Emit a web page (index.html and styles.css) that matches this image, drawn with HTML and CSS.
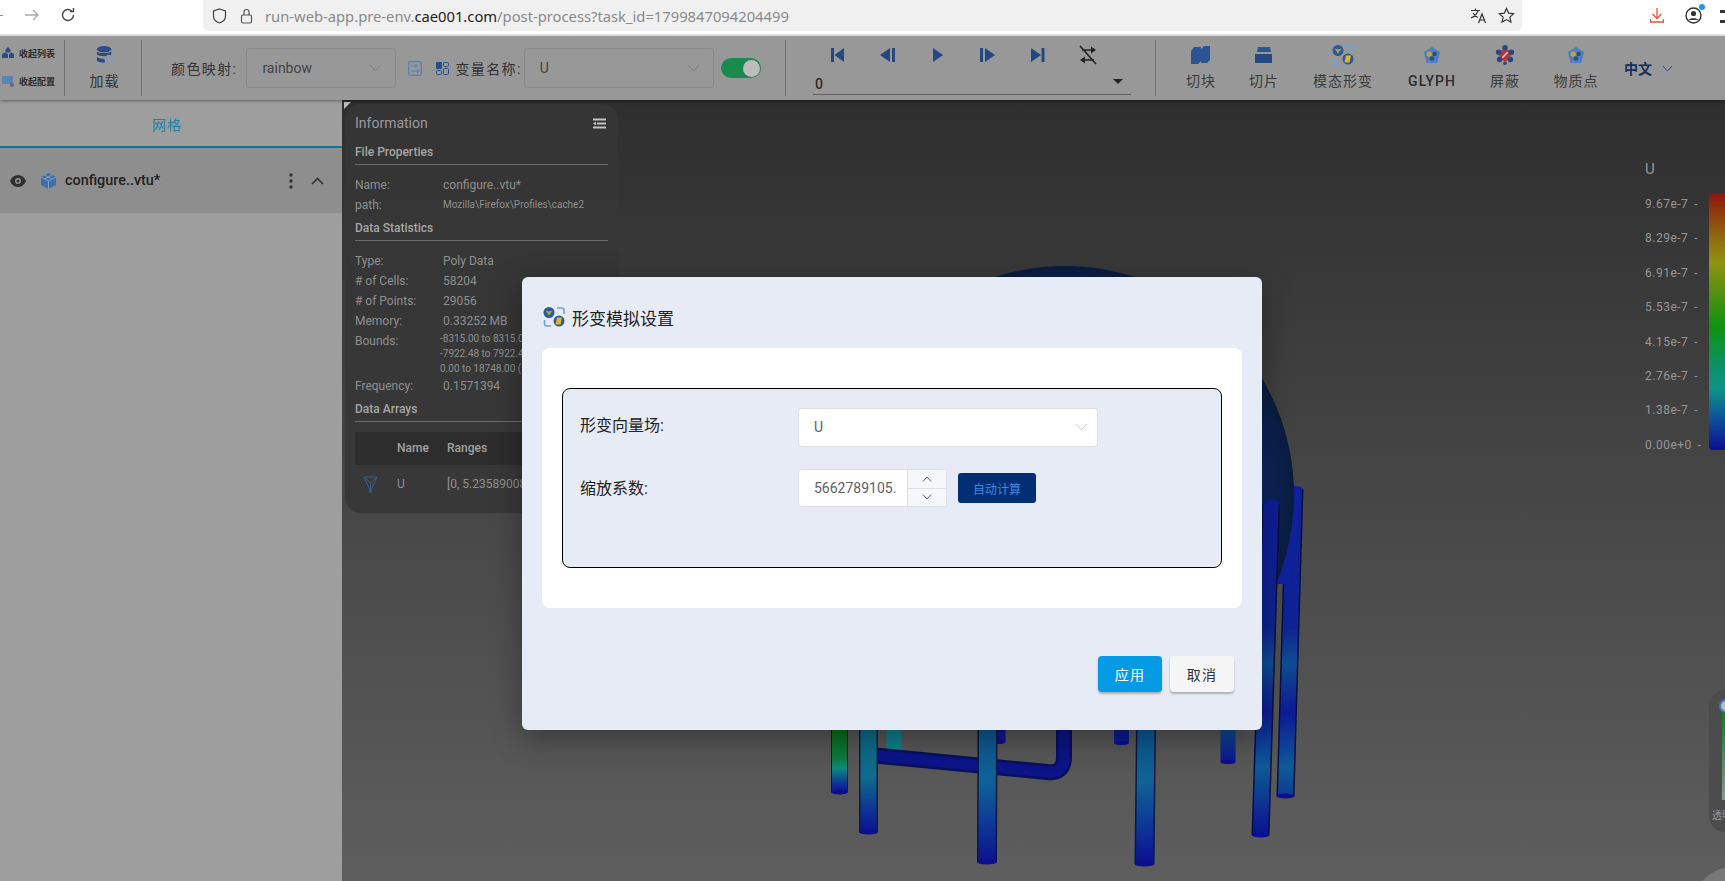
FILE: index.html
```html
<!DOCTYPE html>
<html>
<head>
  <title>Post Process</title>
  <link rel="stylesheet" href="styles.css">
</head>
<body>
  <svg class="defs" width="0" height="0">
    <defs>
      <symbol id="modeIcon" viewBox="0 0 22 20">
        <circle cx="6" cy="5.500" r="5.500" fill="#2a5aa0"/>
        <path d="M2.500 3.500l3.500 1 3.500-1L6 8.500z" fill="#c9a227"/>
        <circle cx="16" cy="14" r="5.500" fill="#2a5aa0"/>
        <path d="M14 10.500h5l-1.500 7h-5z" fill="#e6b422"/>
        <path d="M14 1h4.500q2.500 0 2.500 2.500V7M8 19H4q-2.500 0-2.500-2.500V13" fill="none" stroke="#6fa0e0" stroke-width="1.600"/>
      </symbol>
      <symbol id="penta" viewBox="0 0 20 20">
        <path d="M10 1l9 6-3 12H4L1 7z" fill="#4f7fc0"/>
        <circle cx="7" cy="9" r="3" fill="#c9a227"/>
        <circle cx="13" cy="9" r="2.500" fill="#2a4d85"/>
        <circle cx="10" cy="14" r="2.500" fill="#2a4d85"/>
      </symbol>
      <linearGradient id="tubeFront" gradientUnits="userSpaceOnUse" x1="0" y1="700" x2="0" y2="866">
        <stop offset="0" stop-color="#0e4f8c"/>
        <stop offset="0.500" stop-color="#0e6296"/>
        <stop offset="0.800" stop-color="#0e2f98"/>
        <stop offset="1" stop-color="#0c0e90"/>
      </linearGradient>
      <linearGradient id="tubeTeal" gradientUnits="userSpaceOnUse" x1="0" y1="730" x2="0" y2="834">
        <stop offset="0" stop-color="#0e6a88"/>
        <stop offset="0.450" stop-color="#0e6c8c"/>
        <stop offset="0.800" stop-color="#0e2e96"/>
        <stop offset="1" stop-color="#0c0e90"/>
      </linearGradient>
      <linearGradient id="tubeGreen" gradientUnits="userSpaceOnUse" x1="0" y1="730" x2="0" y2="794">
        <stop offset="0" stop-color="#0b6a1a"/>
        <stop offset="0.450" stop-color="#0c7a40"/>
        <stop offset="0.600" stop-color="#0d8a80"/>
        <stop offset="0.850" stop-color="#0e2e96"/>
        <stop offset="1" stop-color="#0c0e90"/>
      </linearGradient>
      <linearGradient id="tubeRear" gradientUnits="userSpaceOnUse" x1="0" y1="730" x2="0" y2="763">
        <stop offset="0" stop-color="#0e4a8c"/>
        <stop offset="1" stop-color="#0c1490"/>
      </linearGradient>
      <linearGradient id="tubeRight" gradientUnits="userSpaceOnUse" x1="0" y1="489" x2="0" y2="837">
        <stop offset="0" stop-color="#0e1e9a"/>
        <stop offset="0.400" stop-color="#0e2494"/>
        <stop offset="0.500" stop-color="#0e4f92"/>
        <stop offset="0.640" stop-color="#0e1a98"/>
        <stop offset="0.800" stop-color="#0e5a96"/>
        <stop offset="1" stop-color="#0c0e90"/>
      </linearGradient>
      <radialGradient id="sphereShade" gradientUnits="userSpaceOnUse" cx="1065" cy="495" r="229">
        <stop offset="0" stop-color="#10309a"/>
        <stop offset="0.800" stop-color="#0f2a72"/>
        <stop offset="1" stop-color="#0a1c3e"/>
      </radialGradient>
    </defs>
  </svg>

  <div class="browser-bar">
    <span class="nav-back"></span>
    <svg class="nav-icon forward" width="16" height="16" viewBox="0 0 16 16"><path d="M1 8h13M9 3l5 5-5 5" fill="none" stroke="#aaa" stroke-width="1.300"/></svg>
    <svg class="nav-icon reload" width="16" height="16" viewBox="0 0 16 16"><path d="M13.500 8a5.500 5.500 0 1 1-1.800-4.100M13.500 1v3.500H10" fill="none" stroke="#444" stroke-width="1.400"/></svg>
    <div class="url-bar">
      <svg class="url-shield" width="15" height="16" viewBox="0 0 15 16"><path d="M7.500 1l6 2v5c0 3.500-3 6-6 7-3-1-6-3.500-6-7V3z" fill="none" stroke="#444" stroke-width="1.200"/></svg>
      <svg class="url-lock" width="13" height="16" viewBox="0 0 13 16"><rect x="1.500" y="7" width="10" height="8" rx="1.500" fill="none" stroke="#555" stroke-width="1.200"/><path d="M4 7V4a2.500 2.500 0 0 1 5 0v3" fill="none" stroke="#555" stroke-width="1.200"/></svg>
      <span class="url-text">run-web-app.pre-env.<b>cae001.com</b>/post-process?task_id=1799847094204499</span>
      <svg class="url-translate" width="17" height="17" viewBox="0 0 17 17"><path d="M1 3.500h9M5.500 1.500v2M8 3.500c-1 3.500-3.500 6-7 7.500M3 6c1 2 3 3.500 5 4.500" fill="none" stroke="#333" stroke-width="1.100"/><path d="M8.500 16l3.500-9 3.500 9M9.800 13h4.400" fill="none" stroke="#333" stroke-width="1.200"/></svg>
      <svg class="url-star" width="17" height="17" viewBox="0 0 17 17"><path d="M8.500 1.500l2.100 4.600 5 .6-3.700 3.400 1 5-4.400-2.500-4.400 2.500 1-5L1.400 6.700l5-.6z" fill="none" stroke="#333" stroke-width="1.200"/></svg>
    </div>
    <svg class="bar-download" width="14" height="15" viewBox="0 0 14 15"><path d="M7 0v10M2.500 6L7 10.500 11.500 6M.5 11v3h13v-3" fill="none" stroke="#e8562a" stroke-width="1.300"/></svg>
    <div class="bar-profile">
      <svg width="17" height="17" viewBox="0 0 17 17"><circle cx="8.500" cy="8.500" r="7.500" fill="none" stroke="#333" stroke-width="1.400"/><circle cx="8.500" cy="6.500" r="2.600" fill="#333"/><path d="M3.500 13c1-2.500 9-2.500 10 0z" fill="#333"/></svg>
      <span class="profile-dot"></span>
    </div>
    <span class="bar-menu"></span>
  </div>

  <div class="toolbar">
    <div class="fold-group">
      <div class="fold-item">
        <svg width="12" height="12" viewBox="0 0 12 12"><path d="M6 0l2.500 2.500v3H3.500v-3zM0 7l3-1.500L6 7v4H0zM7 7l2.500-1.500L12 7v4H7z" fill="#2a4d85"/></svg>
        <span>收起列表</span>
      </div>
      <div class="fold-item">
        <svg width="12" height="12" viewBox="0 0 12 12"><rect x="0" y="1" width="11" height="8" fill="#5f80b5"/><circle cx="10" cy="10" r="2" fill="#667"/></svg>
        <span>收起配置</span>
      </div>
    </div>
    <div class="divider"></div>
    <div class="load-btn">
      <svg width="18" height="18" viewBox="0 0 18 20"><ellipse cx="8" cy="3.500" rx="8" ry="3.500" fill="#2a4d85"/><path d="M0 6c2 2.500 14 2.500 16 0v3.500c-2 2.500-14 2.500-16 0zM0 12c2 2.500 8 2.500 9 2v4c-3 1-8 0-9-2z" fill="#2a4d85"/><circle cx="13" cy="14.500" r="4" fill="none" stroke="#6fa0d0" stroke-width="1.800" stroke-dasharray="4 1.500"/></svg>
      <span>加载</span>
    </div>
    <div class="divider"></div>

    <div class="settings">
      <span class="tool-label color-label">颜色映射:</span>
      <div class="tool-select color-select">
        <span>rainbow</span>
        <svg width="13" height="8" viewBox="0 0 13 8"><path d="M1 1l5.500 6L12 1" fill="none" stroke="#7d7d7d" stroke-width="1"/></svg>
      </div>
      <svg class="set-icon" width="14" height="15" viewBox="0 0 14 15"><rect x=".7" y=".7" width="12.600" height="13.600" rx="1.500" fill="none" stroke="#4f7fc0" stroke-width="1.200"/><path d="M3 5h3M3 10h5" stroke="#4f7fc0"/><circle cx="8" cy="5" r="1.300" fill="none" stroke="#4f7fc0"/><circle cx="10" cy="10" r="1.300" fill="none" stroke="#4f7fc0"/></svg>
      <svg class="grid-icon" width="13" height="13" viewBox="0 0 13 13"><rect width="6" height="7" rx="1" fill="#2a4d85"/><rect x="7.500" y=".5" width="5" height="4" rx="1" fill="none" stroke="#2a4d85"/><rect x=".5" y="8.500" width="5" height="4" rx="1" fill="none" stroke="#2a4d85"/><rect x="7.500" y="6.500" width="5" height="6" rx="1" fill="none" stroke="#2a4d85"/></svg>
      <span class="tool-label var-label">变量名称:</span>
      <div class="tool-select var-select">
        <span>U</span>
        <svg width="13" height="8" viewBox="0 0 13 8"><path d="M1 1l5.500 6L12 1" fill="none" stroke="#7d7d7d" stroke-width="1"/></svg>
      </div>
      <div class="switch"><span class="switch-knob"></span></div>
    </div>
    <div class="divider"></div>

    <div class="player">
      <div class="player-btns">
        <button class="player-btn"><svg width="14" height="14" viewBox="0 0 14 14"><path d="M0 0h3v14H0zM13 0v14L3.500 7z" fill="#24487f"/></svg></button>
        <button class="player-btn"><svg width="16" height="14" viewBox="0 0 16 14"><path d="M10 0v14L0 7zM12 0h3v14h-3z" fill="#24487f"/></svg></button>
        <button class="player-btn"><svg width="10" height="14" viewBox="0 0 10 14"><path d="M0 0l10 7-10 7z" fill="#24487f"/></svg></button>
        <button class="player-btn"><svg width="16" height="14" viewBox="0 0 16 14"><path d="M0 0h3v14H0zM5 0l10 7-10 7z" fill="#24487f"/></svg></button>
        <button class="player-btn"><svg width="14" height="14" viewBox="0 0 14 14"><path d="M0 0l10 7-10 7zM10.500 0h3v14h-3z" fill="#24487f"/></svg></button>
        <button class="player-btn"><svg width="18" height="20" viewBox="0 0 18 20"><path d="M1 1l16 18M3 5h10M5 15h10" fill="none" stroke="#222" stroke-width="1.600"/><path d="M12 1.500l5 3.500-5 3.500zM6 11.500L1 15l5 3.500z" fill="#222"/></svg></button>
      </div>
      <div class="frame-select">
        <span>0</span>
        <span class="frame-arrow"></span>
      </div>
    </div>
    <div class="divider"></div>

    <div class="tools">
      <div class="tool tool-block">
        <svg width="20" height="20" viewBox="0 0 20 20"><path d="M0 6l3-4h7v14l-3 3H0zM10 4l3-3h6v14l-3 3h-6z" fill="#2a5592"/></svg>
        <span>切块</span>
      </div>
      <div class="tool tool-slice">
        <svg width="18" height="20" viewBox="0 0 18 20"><path d="M3 2h12l1 5H2z" fill="#2a5592"/><rect y="9" width="17" height="9" fill="#24487f"/></svg>
        <span>切片</span>
      </div>
      <div class="tool tool-mode">
        <svg width="22" height="20"><use href="#modeIcon"/></svg>
        <span>模态形变</span>
      </div>
      <div class="tool tool-glyph">
        <svg width="18" height="20"><use href="#penta"/></svg>
        <span>GLYPH</span>
      </div>
      <div class="tool tool-shield">
        <svg width="20" height="22" viewBox="0 0 20 22"><circle cx="10" cy="11" r="6.500" fill="#b9343a"/><path d="M7 14l6-6" stroke="#ddd" stroke-width="1.500"/><circle cx="10" cy="3" r="3" fill="#24487f"/><circle cx="3" cy="8" r="3" fill="#24487f"/><circle cx="17" cy="8" r="3" fill="#24487f"/><circle cx="4" cy="16" r="3" fill="#24487f"/><circle cx="16" cy="16" r="3" fill="#24487f"/><circle cx="10" cy="20" r="2" fill="#24487f"/></svg>
        <span>屏蔽</span>
      </div>
      <div class="tool tool-points">
        <svg width="18" height="20"><use href="#penta"/></svg>
        <span>物质点</span>
      </div>
    </div>
    <div class="lang">
      <span>中文</span>
      <svg width="11" height="7" viewBox="0 0 11 7"><path d="M1 1l4.500 5L10 1" fill="none" stroke="#2a4d85" stroke-width="1"/></svg>
    </div>
  </div>

  <div class="main">
    <div class="sidebar">
      <div class="side-tab">网格</div>
      <div class="file-row">
        <svg class="file-eye" width="16" height="12" viewBox="0 0 16 12"><path d="M0 6c3-8 13-8 16 0-3 8-13 8-16 0z" fill="#303030"/><circle cx="8" cy="6" r="3" fill="#8e8e8e"/><circle cx="8" cy="6" r="1.500" fill="#303030"/></svg>
        <svg class="file-cube" width="15" height="16" viewBox="0 0 15 16"><path d="M7.500 0L15 4v8l-7.500 4L0 12V4z" fill="#3f6ea8"/><path d="M0 4l7.500 4L15 4M7.500 8v8M3.500 2l7.500 4M11 2L3.500 6" fill="none" stroke="#8eaccc" stroke-width=".8"/></svg>
        <span class="file-name">configure..vtu*</span>
        <svg class="file-more" width="4" height="16" viewBox="0 0 4 16"><circle cx="2" cy="2" r="1.700" fill="#333"/><circle cx="2" cy="8" r="1.700" fill="#333"/><circle cx="2" cy="14" r="1.700" fill="#333"/></svg>
        <svg class="file-up" width="13" height="8" viewBox="0 0 13 8"><path d="M1 7l5.500-5.500L12 7" fill="none" stroke="#333" stroke-width="1.600"/></svg>
      </div>
    </div>

    <div class="canvas">
      <svg class="scene" width="1383" height="781" viewBox="342 100 1383 781">
        <!-- rear legs -->
        <g fill="none">
          <line x1="1294.500" y1="489" x2="1285.500" y2="796" stroke="#08103f" stroke-width="18"/>
          <line x1="1294.500" y1="489" x2="1285.500" y2="796" stroke="url(#tubeRight)" stroke-width="15"/>
          <line x1="839.500" y1="725" x2="839.500" y2="792" stroke="#08203f" stroke-width="17"/>
          <line x1="839.500" y1="725" x2="839.500" y2="792" stroke="url(#tubeGreen)" stroke-width="15"/>
          <line x1="894" y1="725" x2="894" y2="752" stroke="#0d7f88" stroke-width="15"/>
          <line x1="998" y1="725" x2="998" y2="742" stroke="#0c1a8c" stroke-width="15"/>
          <line x1="1121.500" y1="725" x2="1121.500" y2="743" stroke="#0c1a8c" stroke-width="15"/>
          <line x1="1228" y1="725" x2="1228" y2="762" stroke="url(#tubeRear)" stroke-width="15"/>
        </g>
        <ellipse cx="1294.500" cy="489" rx="8.500" ry="3" fill="#0e1e9a"/>
        <ellipse cx="839.500" cy="792" rx="8.500" ry="2.500" fill="#0c0e90"/>
        <ellipse cx="998" cy="742" rx="7.500" ry="2" fill="#0c0e90"/>
        <ellipse cx="1121.500" cy="743" rx="7.500" ry="2" fill="#0c0e90"/>
        <ellipse cx="1228" cy="762" rx="7.500" ry="2" fill="#0c0e90"/>
        <path d="M1277 584h14l9-95-23 20z" fill="#10229a"/>
        <circle cx="1065" cy="495" r="229" fill="url(#sphereShade)"/>
        <!-- connecting pipe -->
        <path d="M870 755L1047 772Q1064 774 1064 757V725" fill="none" stroke="#07105a" stroke-width="16"/>
        <path d="M870 755L1047 772Q1064 774 1064 757V725" fill="none" stroke="#0c1488" stroke-width="11"/>
        <!-- front legs -->
        <g fill="none">
          <line x1="868.500" y1="725" x2="868.500" y2="832" stroke="#08203f" stroke-width="19"/>
          <line x1="868.500" y1="725" x2="868.500" y2="832" stroke="url(#tubeTeal)" stroke-width="16"/>
          <line x1="987.500" y1="725" x2="987" y2="862" stroke="#08183f" stroke-width="20"/>
          <line x1="987.500" y1="725" x2="987" y2="862" stroke="url(#tubeFront)" stroke-width="17"/>
          <line x1="1146" y1="725" x2="1144.500" y2="864" stroke="#08183f" stroke-width="20"/>
          <line x1="1146" y1="725" x2="1144.500" y2="864" stroke="url(#tubeFront)" stroke-width="17"/>
          <line x1="1271" y1="503" x2="1260.500" y2="835" stroke="#08103f" stroke-width="18"/>
          <line x1="1271" y1="503" x2="1260.500" y2="835" stroke="url(#tubeRight)" stroke-width="15"/>
        </g>
        <ellipse cx="1271" cy="503" rx="9" ry="3" fill="#0e1e9a"/>
        <ellipse cx="868.500" cy="832" rx="9.500" ry="2.500" fill="#0c0e90"/>
        <ellipse cx="987" cy="862" rx="10" ry="2.500" fill="#0c0e90"/>
        <ellipse cx="1144.500" cy="864" rx="10" ry="2.500" fill="#0c0e90"/>
        <ellipse cx="1260.500" cy="835" rx="9" ry="2.500" fill="#0c0e90"/>
        <ellipse cx="1285.500" cy="796" rx="9" ry="2.500" fill="#0c0e90"/>
      </svg>

      <div class="info-corner"></div>
      <div class="info-panel">
        <div class="info-head">
          <span>Information</span>
          <svg width="13" height="11" viewBox="0 0 13 11"><path d="M0 1.500h13M4 5.500h9M0 9.500h13" stroke="#c4c4c4" stroke-width="2"/><path d="M3 3.500L0 5.500l3 2z" fill="#c4c4c4"/></svg>
        </div>
        <h4 class="info-title first">File Properties</h4>
        <div class="info-row"><label>Name:</label><span>configure..vtu*</span></div>
        <div class="info-row"><label>path:</label><span class="small">Mozilla\Firefox\Profiles\cache2</span></div>
        <h4 class="info-title">Data Statistics</h4>
        <div class="info-row"><label>Type:</label><span>Poly Data</span></div>
        <div class="info-row"><label># of Cells:</label><span>58204</span></div>
        <div class="info-row"><label># of Points:</label><span>29056</span></div>
        <div class="info-row"><label>Memory:</label><span>0.33252 MB</span></div>
        <div class="info-row bounds">
          <label>Bounds:</label>
          <div class="bounds-list">
            <span>-8315.00 to 8315.00 (16630.00)</span>
            <span>-7922.48 to 7922.48 (15844.96)</span>
            <span>0.00 to 18748.00 (18748.00)</span>
          </div>
        </div>
        <div class="info-row"><label>Frequency:</label><span>0.1571394</span></div>
        <h4 class="info-title">Data Arrays</h4>
        <div class="array-head"><span class="col-name">Name</span><span>Ranges</span></div>
        <div class="array-row">
          <svg class="array-icon" width="15" height="17" viewBox="0 0 15 17"><path d="M1 1h13L7.500 15zM7.500 15V7M1 1l6.500 6L14 1" fill="none" stroke="#335f8a" stroke-width="1"/><circle cx="7.500" cy="15.500" r="1.300" fill="#335f8a"/></svg>
          <span class="col-name">U</span>
          <span>[0, 5.23589008e-7]</span>
        </div>
      </div>

      <div class="legend">
        <div class="legend-labels">
          <div class="legend-title">U</div>
          <div class="legend-tick">9.67e-7<i>-</i></div>
          <div class="legend-tick">8.29e-7<i>-</i></div>
          <div class="legend-tick">6.91e-7<i>-</i></div>
          <div class="legend-tick">5.53e-7<i>-</i></div>
          <div class="legend-tick">4.15e-7<i>-</i></div>
          <div class="legend-tick">2.76e-7<i>-</i></div>
          <div class="legend-tick">1.38e-7<i>-</i></div>
          <div class="legend-tick">0.00e+0<i>-</i></div>
        </div>
        <div class="legend-bar"></div>
      </div>

      <div class="opacity-box">
        <span class="opacity-knob"></span>
        <span class="opacity-track"></span>
        <span class="opacity-text">透明度</span>
      </div>
      <div class="corner-ball"></div>
    </div>
  </div>

  <div class="dialog">
    <div class="dialog-title">
      <svg width="22" height="20"><use href="#modeIcon"/></svg>
      <span>形变模拟设置</span>
    </div>
    <div class="dialog-card">
      <div class="form-box">
        <div class="form-row">
          <label>形变向量场:</label>
          <div class="field-select">
            <span>U</span>
            <svg width="13" height="8" viewBox="0 0 13 8"><path d="M1 1l5.500 6L12 1" fill="none" stroke="#c6c9d0" stroke-width="1"/></svg>
          </div>
        </div>
        <div class="form-row scale-row">
          <label>缩放系数:</label>
          <div class="field-number">
            <span class="number-value">5662789105.</span>
            <div class="number-ctrl">
              <span><svg width="10" height="6" viewBox="0 0 10 6"><path d="M1 5.500L5 1l4 4.500" fill="none" stroke="#606266"/></svg></span>
              <span><svg width="10" height="6" viewBox="0 0 10 6"><path d="M1 .5L5 5l4-4.500" fill="none" stroke="#606266"/></svg></span>
            </div>
          </div>
          <button class="auto-btn">自动计算</button>
        </div>
      </div>
    </div>
    <div class="dialog-actions">
      <button class="action-btn apply">应用</button>
      <button class="action-btn cancel">取消</button>
    </div>
  </div>
</body>
</html>
```

FILE: styles.css
```css
* {
  box-sizing: border-box;
}

html, body {
  margin: 0;
  height: 881px;
  overflow: hidden;
}

body {
  display: flex;
  flex-direction: column;
  font-family: Roboto, "Noto Sans CJK SC", sans-serif;
  background: #fff;
  position: relative;
}

.defs {
  position: absolute;
}

button {
  border: none;
  padding: 0;
  font: inherit;
  background: none;
}

/* browser chrome */
.browser-bar {
  display: flex;
  align-items: flex-start;
  height: 36px;
  flex: none;
  background: #fff;
  border-bottom: 2px solid #e8e8e8;
}

.nav-back {
  width: 3px;
  height: 1px;
  margin-top: 15px;
  background: #999;
}

.nav-icon {
  margin-top: 7px;
}

.forward {
  margin-left: 21px;
}

.reload {
  margin-left: 20px;
}

.url-bar {
  display: flex;
  align-items: center;
  width: 1320px;
  height: 31px;
  margin-left: 127px;
  padding-left: 9px;
  background: #f0f0f0;
  border-radius: 0 0 6px 6px;
}

.url-lock {
  margin-left: 13px;
}

.url-text {
  margin-left: 12px;
  font-family: "Noto Sans", sans-serif;
  font-size: 14.750px;
  color: #8a8a8a;
  white-space: nowrap;
}

.url-text b {
  font-weight: 400;
  color: #222;
}

.url-translate {
  margin-left: auto;
}

.url-star {
  margin: 0 7px 0 11px;
}

.bar-download {
  margin: 8px 0 0 128px;
}

.bar-profile {
  position: relative;
  margin: 7px 0 0 21px;
}

.profile-dot {
  position: absolute;
  top: -3px;
  right: -3px;
  width: 6px;
  height: 6px;
  border-radius: 50%;
  background: #1e9be8;
}

.bar-menu {
  width: 5px;
  height: 13px;
  margin: 10px 0 0 18px;
  border-top: 3px solid #333;
  border-bottom: 3px solid #333;
}

/* toolbar */
.toolbar {
  display: flex;
  height: 64px;
  flex: none;
  background: #989898;
  color: #333;
  box-shadow: 0 1px 3px rgba(0, 0, 0, 0.4);
  z-index: 1;
}

.divider {
  flex: none;
  width: 1px;
  margin: 4px 0;
  background: #6f6f6f;
}

.fold-group {
  display: flex;
  flex-direction: column;
  justify-content: space-around;
  width: 64px;
  padding: 3px 0 5px 2px;
}

.fold-item {
  display: flex;
  align-items: center;
  gap: 5px;
  font-size: 9px;
  font-weight: 700;
  color: #2c2c2c;
}

.load-btn {
  display: flex;
  flex-direction: column;
  align-items: center;
  width: 76px;
  padding: 10px 0 0 3px;
  font-size: 14px;
  letter-spacing: 1px;
}

.load-btn span {
  margin-top: 7px;
  line-height: 20px;
}

.settings {
  display: flex;
  align-items: center;
  width: 643px;
  padding-left: 29px;
}

.tool-label {
  font-size: 14px;
  letter-spacing: 1.400px;
  white-space: nowrap;
}

.tool-select {
  display: flex;
  align-items: center;
  justify-content: space-between;
  height: 40px;
  padding: 0 13px 0 15px;
  border: 1px solid #8a8a8a;
  border-radius: 4px;
  font-size: 14px;
  color: #444;
}

.color-select {
  width: 150px;
  margin-left: 9px;
}

.set-icon {
  margin-left: 12px;
}

.grid-icon {
  margin-left: 14px;
}

.var-label {
  margin-left: 6px;
}

.var-select {
  width: 190px;
  margin-left: 2px;
}

.switch {
  display: flex;
  justify-content: flex-end;
  align-items: center;
  width: 40px;
  height: 20px;
  margin-left: 7px;
  padding-right: 1px;
  border-radius: 10px;
  background: #1a8a4f;
}

.switch-knob {
  width: 17px;
  height: 17px;
  border-radius: 50%;
  background: #bdbdbd;
}

.player {
  width: 369px;
  padding: 4px 0 0 27px;
}

.player-btns {
  display: flex;
  height: 30px;
}

.player-btn {
  display: flex;
  align-items: center;
  justify-content: center;
  width: 50px;
}

.frame-select {
  display: flex;
  align-items: center;
  justify-content: space-between;
  width: 318px;
  height: 25px;
  padding: 4px 8px 0 2px;
  border-bottom: 1px solid #5f5f5f;
  font-size: 14px;
  font-weight: 500;
  color: #2c2c2c;
}

.frame-arrow {
  width: 0;
  height: 0;
  margin-bottom: 6px;
  border-left: 5px solid transparent;
  border-right: 5px solid transparent;
  border-top: 5px solid #222;
}

.tools {
  display: flex;
  padding-left: 14px;
}

.tool {
  display: flex;
  flex-direction: column;
  align-items: center;
  padding-top: 9px;
  font-size: 14px;
  letter-spacing: 1px;
  color: #3a3a3a;
}

.tool svg {
  height: 20px;
}

.tool span {
  margin-top: 6px;
  line-height: 20px;
  white-space: nowrap;
}

.tool-block { width: 62px; }
.tool-slice { width: 64px; }
.tool-mode { width: 94px; }
.tool-glyph { width: 84px; font-weight: 500; color: #2c2c2c; }
.tool-shield { width: 62px; }
.tool-points { width: 80px; }

.lang {
  display: flex;
  align-items: center;
  gap: 10px;
  margin-left: 8px;
  font-size: 14px;
  font-weight: 700;
  color: #142f5e;
}

/* main area */
.main {
  display: flex;
  flex: 1;
  min-height: 0;
}

.sidebar {
  width: 342px;
  flex: none;
  background: #9e9e9e;
}

.side-tab {
  height: 48px;
  padding-right: 8px;
  border-bottom: 2px solid #0d75a6;
  font-size: 14px;
  line-height: 50px;
  text-align: center;
  color: #1f7fa8;
  letter-spacing: 1px;
}

.file-row {
  display: flex;
  align-items: center;
  height: 65px;
  background: #8e8e8e;
}

.file-eye {
  margin-left: 10px;
}

.file-cube {
  margin-left: 15px;
}

.file-name {
  margin-left: 9px;
  font-size: 14.400px;
  font-weight: 500;
  color: #222;
}

.file-more {
  margin-left: auto;
}

.file-up {
  margin: 0 18px 0 18px;
}

.canvas {
  position: relative;
  flex: 1;
  overflow: hidden;
  background: linear-gradient(#2e2e2e, #5e5e5e);
}

.scene {
  position: absolute;
  top: 0;
  left: 0;
}

.info-corner {
  position: absolute;
  top: 2px;
  left: 2px;
  width: 0;
  height: 0;
  border-top: 7px solid #bdbdbd;
  border-right: 7px solid transparent;
}

.info-panel {
  position: absolute;
  top: 4px;
  left: 3px;
  width: 273px;
  height: 409px;
  padding: 0 10px;
  border-radius: 15px;
  background: rgba(54, 54, 54, 0.85);
  font-size: 12px;
  color: #8f8f8f;
}

.info-head {
  display: flex;
  align-items: center;
  justify-content: space-between;
  height: 38px;
  padding: 0 2px 0 0;
  font-size: 14px;
  color: #9a9a9a;
}

.info-title {
  height: 23px;
  margin: 3px 0 10px;
  padding-top: 2px;
  border-bottom: 1px solid #6c6c6c;
  font-size: 12px;
  font-weight: 500;
  line-height: 16px;
  color: #a6a6a6;
}

.info-title.first {
  margin-top: 0;
}

.info-row {
  display: flex;
  height: 20px;
  line-height: 20px;
}

.info-row label {
  width: 88px;
  flex: none;
}

.info-row .small {
  font-size: 10px;
}

.bounds {
  height: 45px;
}

.bounds-list {
  display: flex;
  flex-direction: column;
  margin-left: -3px;
  font-size: 10px;
  line-height: 15px;
  white-space: nowrap;
}

.array-head {
  display: flex;
  height: 33px;
  padding-left: 42px;
  background: #2d2d2d;
  font-weight: 500;
  line-height: 33px;
  color: #a0a0a0;
}

.col-name {
  width: 50px;
}

.array-row {
  position: relative;
  display: flex;
  height: 40px;
  padding-left: 42px;
  line-height: 38px;
  white-space: nowrap;
}

.array-icon {
  position: absolute;
  top: 11px;
  left: 8px;
}

.legend {
  position: absolute;
  top: 55px;
  right: 0;
  display: flex;
}

.legend-labels {
  width: 64px;
  font-size: 12px;
  letter-spacing: 0.500px;
  color: #969696;
}

.legend-title {
  height: 32px;
  font-size: 15px;
  line-height: 28px;
}

.legend-tick {
  display: flex;
  justify-content: flex-start;
  height: 34.400px;
  line-height: 34px;
  white-space: nowrap;
}

.legend-tick i {
  margin-left: 6px;
  font-style: normal;
}

.legend-bar {
  width: 16px;
  height: 257px;
  margin-top: 38px;
  border-radius: 4px 0 0 4px;
  background: linear-gradient(#8f140f, #8f6410 16%, #8f9410 27%, #4f8f10 40%, #0e9410 52%, #0e9060 66%, #0e9488 76%, #0e4f9a 88%, #0c0e90);
}

.opacity-box {
  position: absolute;
  top: 590px;
  right: 0;
  width: 16px;
  height: 142px;
  overflow: hidden;
  border-radius: 16px 0 0 16px;
  background: #4c4c4c;
}

.opacity-knob {
  position: absolute;
  top: 9px;
  left: 10px;
  width: 14px;
  height: 14px;
  border: 2px solid #3a78c0;
  border-radius: 50%;
  background: #bbb;
  z-index: 1;
}

.opacity-track {
  position: absolute;
  top: 20px;
  left: 13px;
  width: 6px;
  height: 90px;
  background: linear-gradient(#0c7a1a, #8a9a90);
}

.opacity-text {
  position: absolute;
  top: 117px;
  left: 3px;
  font-size: 10px;
  color: #999;
  white-space: nowrap;
}

.corner-ball {
  position: absolute;
  right: -45px;
  bottom: -62px;
  width: 76px;
  height: 76px;
  border-radius: 50%;
  background: #787878;
}

/* dialog */
.dialog {
  position: absolute;
  top: 277px;
  left: 522px;
  display: flex;
  flex-direction: column;
  width: 740px;
  height: 453px;
  padding: 0 20px;
  border-radius: 6px;
  background: #e7ebf6;
  box-shadow: 0 8px 30px rgba(0, 0, 0, 0.35);
  z-index: 2;
}

.dialog-title {
  display: flex;
  align-items: center;
  gap: 7px;
  height: 71px;
  padding: 9px 0 0 1px;
  font-size: 17px;
  color: #222;
}

.dialog-card {
  height: 260px;
  padding: 40px 20px;
  border-radius: 8px;
  background: #fff;
}

.form-box {
  height: 180px;
  padding: 18px 16px 0 17px;
  border: 1px solid #000;
  border-radius: 8px;
  background: #e7ebf6;
}

.form-row {
  display: flex;
  align-items: center;
  height: 40px;
}

.form-row label {
  width: 218px;
  flex: none;
  padding-bottom: 7px;
  font-size: 16px;
  color: #222;
}

.scale-row {
  margin-top: 21px;
}

.scale-row label {
  padding-bottom: 3px;
}

.field-select {
  display: flex;
  align-items: center;
  justify-content: space-between;
  width: 300px;
  height: 39px;
  padding: 0 9px 0 15px;
  border: 1px solid #dcdfe6;
  border-radius: 4px;
  background: #fff;
  font-size: 14px;
  color: #606266;
}

.field-number {
  display: flex;
  width: 149px;
  height: 38px;
  border: 1px solid #dcdfe6;
  border-radius: 4px;
  background: #fff;
  overflow: hidden;
}

.number-value {
  width: 108px;
  padding-left: 15px;
  font-size: 14px;
  line-height: 36px;
  color: #606266;
}

.number-ctrl {
  display: flex;
  flex: 1;
  flex-direction: column;
  border-left: 1px solid #dcdfe6;
  background: #f5f7fa;
}

.number-ctrl span {
  display: flex;
  flex: 1;
  align-items: center;
  justify-content: center;
}

.number-ctrl span + span {
  border-top: 1px solid #dcdfe6;
}

.auto-btn {
  width: 78px;
  height: 30px;
  margin-left: 11px;
  border-radius: 3px;
  background: #022f74;
  font-size: 12px;
  color: #3c8ce0;
}

.dialog-actions {
  display: flex;
  justify-content: flex-end;
  gap: 8px;
  padding: 48px 8px 0 0;
}

.action-btn {
  width: 64px;
  height: 36px;
  border-radius: 4px;
  font-size: 14px;
  letter-spacing: 1.200px;
  box-shadow: 0 2px 2px rgba(0, 0, 0, 0.25);
}

.apply {
  background: #039be5;
  color: #fff;
}

.cancel {
  background: #f5f5f5;
  color: #333;
}
```
